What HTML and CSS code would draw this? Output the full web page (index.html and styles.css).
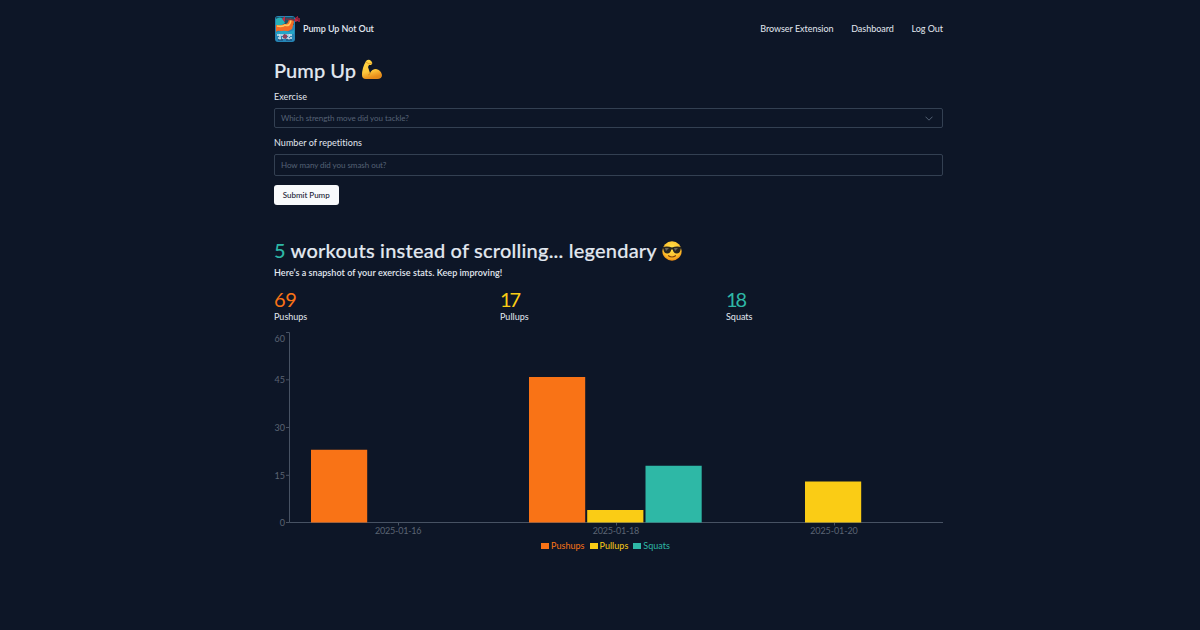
FILE: index.html
```html
<!DOCTYPE html>
<html lang="en">
<head>
<meta charset="utf-8">
<title>Pump Up Not Out</title>
<link rel="stylesheet" href="styles.css">
</head>
<body>
<div class="page">
  <header class="header">
    <a class="brand">
      <svg class="logo" viewBox="0 0 27 28" aria-hidden="true">
        <rect x="1" y="1" width="20" height="26" rx="3" fill="#2685b5"/>
        <path d="M2 2h18v8H2z" fill="#1d5268"/>
        <path d="M2 4q4-3 7 0l2 4-5 4-4-2z" fill="#27b0b5"/>
        <path d="M2 10q5 1 8-1 4 1 5-5 4-1 5 3l-2 7q-5 4-11 2-4-1-5 1z" fill="#f36b25"/>
        <path d="M3 11q6 1 8-1 5 2 6-5" fill="none" stroke="#ffc65c" stroke-width="1.7"/>
        <path d="M2 18q7-4 13-1l5-2v4H2z" fill="#24a6c7"/>
        <path d="M8 4l3-3v6zM21 3l3-2v5l-3 1z" fill="#c52a42"/>
        <path d="M12 4l9 1" stroke="#7c3042" stroke-width="1.3"/>
        <path d="M22 3l3 1v3" fill="none" stroke="#8c2039" stroke-width="2"/>
        <path d="M3 20h16M4 23h14M6 19v6M15 19v6" stroke="#d3e4ed" stroke-width="1.5" stroke-dasharray="3 1"/>
        <circle cx="11" cy="21.5" r="2.3" fill="#91415a"/>
        <path d="M4 25h5m3 0h6" stroke="#193f6c"/>
      </svg>
      <span class="brand-name">Pump Up Not Out</span>
    </a>
    <nav class="nav"><a>Browser Extension</a><a>Dashboard</a><a>Log Out</a></nav>
  </header>
  <main>
    <h1 class="title"><span class="title-text">Pump Up</span>
      <svg class="emoji arm" viewBox="0 0 20 21" role="img" aria-label="Flexed arm">
        <defs><linearGradient id="skin" x2=".3" y2="1"><stop stop-color="#ffda45"/><stop offset=".65" stop-color="#ffc83c"/><stop offset="1" stop-color="#e78b19"/></linearGradient></defs>
        <path d="M4 2q2-2 4-1l2 2q1 2-1 3L7 6 6 8l2 6q2-4 6-4 5 1 6 6 0 4-5 4H4q-4 0-4-4Q0 9 4 2z" fill="url(#skin)"/>
        <path d="M4 3l3 2 3-1M8 14q0 2-2 2M14 19q3 0 5-2" fill="none" stroke="#d88c20" stroke-width=".8"/>
      </svg>
    </h1>
    <form class="form">
      <label class="label exercise">Exercise</label>
      <div class="control select"><span class="placeholder">Which strength move did you tackle?</span>
        <svg class="chevron" viewBox="0 0 8 5"><path d="M.5.7L4 4.2 7.5.7" fill="none" stroke="#536074"/></svg>
      </div>
      <label class="label reps">Number of repetitions</label>
      <div class="control input"><span class="placeholder">How many did you smash out?</span></div>
      <button class="submit" type="button">Submit Pump</button>
    </form>
    <section>
      <h2 class="title summary"><span class="teal">5</span><span class="summary-text">workouts instead of scrolling... legendary</span>
        <svg class="emoji cool" viewBox="0 0 20 20" role="img" aria-label="Cool">
          <defs><radialGradient id="face" cy=".35" r=".7"><stop stop-color="#ffe34b"/><stop offset=".65" stop-color="#ffc02d"/><stop offset="1" stop-color="#e97d0b"/></radialGradient></defs>
          <circle cx="10" cy="10" r="9.7" fill="url(#face)"/>
          <path d="M.6 6q5-1 9.4.4Q14.400 5 19.400 6l-.7 2q-.6 4.500-4 4.500-3.200 0-4-4h-1.400q-.8 4-4 4-3.400 0-4-4.500z" fill="#28251f"/>
          <path d="M3 7l4 0-3 3M12 7l4 0-3 3" fill="#68645a"/>
          <path d="M6 14.500q4 3 8 0" fill="none" stroke="#80410b" stroke-width="1.100"/>
        </svg>
      </h2>
      <p class="subtitle">Here’s a snapshot of your exercise stats. Keep improving!</p>
      <div class="stats">
        <div class="stat"><strong class="orange">69</strong><span>Pushups</span></div>
        <div class="stat"><strong class="yellow narrow">17</strong><span>Pullups</span></div>
        <div class="stat"><strong class="teal narrow">18</strong><span>Squats</span></div>
      </div>
      <svg class="chart" viewBox="0 0 669 205" role="img" aria-label="Workout history">
        <path class="axis" d="M12 4.500h3.500v190H669M12 51.800h3.500M12 99.500h3.500M12 147.300h3.500M12 194.500h3.500M124.500 194.500v3M342.500 194.500v3M560.500 194.500v3"/>
        <path fill="#f97316" d="M37 121.800h56.200v72.700H37zM255 48.900h56.200v145.600H255z"/>
        <path fill="#facc15" d="M313.200 182h56.200v12.500h-56.200zM531 153.500h56.200v41H531z"/>
        <path fill="#2eb8a6" d="M371.500 137.700h56.200v56.800h-56.200z"/>
        <g class="tick y-tick"><text x="11" y="14">60</text><text x="11" y="55">45</text><text x="11" y="103">30</text><text x="11" y="151">15</text><text x="11" y="198">0</text></g>
        <g class="tick x-tick"><text x="124.300" y="205.500" textLength="46.500">2025-01-16</text><text x="342" y="205.500" textLength="46.500">2025-01-18</text><text x="560" y="205.500" textLength="47.500">2025-01-20</text></g>
      </svg>
      <div class="legend"><span class="key orange">Pushups</span><span class="key yellow">Pullups</span><span class="key teal">Squats</span></div>
    </section>
  </main>
</div>
</body>
</html>
```
FILE: styles.css
```css
* { box-sizing: border-box; }
body { margin: 0; background: #0d1627; color: #e2e8f0; font: 9px/12px Lato, "Open Sans", sans-serif; }
.page { width: 669px; height: 630px; margin-left: 274px; }
.header { height: 57px; display: flex; align-items: center; justify-content: space-between; }
.brand { display: flex; align-items: center; gap: 2px; }
.logo { width: 27px; height: 28px; }
.brand-name { font-weight: 600; letter-spacing: -.08px; }
.nav { display: flex; gap: 17.700px; letter-spacing: -.03px; }
.title { display: flex; align-items: center; height: 28px; margin: -1px 0 0; font-size: 20px; line-height: 28px; font-weight: 500; gap: 6px; }
.title-text, .summary-text { -webkit-text-stroke: .15px currentColor; }
.title-text { letter-spacing: .05px; }
.summary-text { letter-spacing: .21px; }
.emoji { width: 20px; height: 20px; flex: none; }
.arm { height: 21px; margin-top: -2px; }
.cool { margin-top: 1px; }
.form { display: flex; flex-direction: column; margin-top: 7px; }
.label { height: 12px; letter-spacing: .07px; }
.reps { letter-spacing: .04px; }
.control { border: 1px solid #334052; border-radius: 2px; display: flex; align-items: center; justify-content: space-between; padding: 0 9px 0 6px; color: #566276; font-size: 8px; }
.placeholder { letter-spacing: -.05px; }
.select { height: 20px; margin: 5px 0 9px; }
.input { height: 22px; margin: 5px 0 9px; }
.chevron { width: 8px; height: 5px; }
.submit { width: 64.500px; height: 20px; padding: 0; border: 0; border-radius: 3px; background: #f8fafc; color: #172033; font: 500 8px/20px Lato, sans-serif; letter-spacing: -.03px; }
.summary { margin-top: 31px; gap: 5px; }
.subtitle { margin: 3px 0 0; height: 12px; font-weight: 600; letter-spacing: .06px; }
.stats { display: grid; grid-template-columns: repeat(3, 226px); margin-top: 9px; height: 40px; }
.stat { display: flex; flex-direction: column; }
.stat strong { font-size: 20px; line-height: 22px; font-weight: 400; letter-spacing: -.3px; }
.stat .narrow { letter-spacing: -2px; }
.stat span { line-height: 14px; }
.orange { color: #f97316; }
.yellow { color: #facc15; }
.teal { color: #2eb8a6; }
.chart { width: 669px; height: 205px; display: block; overflow: visible; }
.axis { fill: none; stroke: #475263; stroke-width: 1; }
.tick { fill: #5b6473; font: 9px Lato, sans-serif; }
.y-tick { text-anchor: end; }
.x-tick { text-anchor: middle; }
.legend { display: flex; justify-content: center; gap: 5px; margin: 7px 6px 0 0; letter-spacing: .03px; }
.key { display: flex; align-items: center; gap: 2px; }
.key::before { content: ""; width: 8px; height: 6px; background: currentColor; }
```
